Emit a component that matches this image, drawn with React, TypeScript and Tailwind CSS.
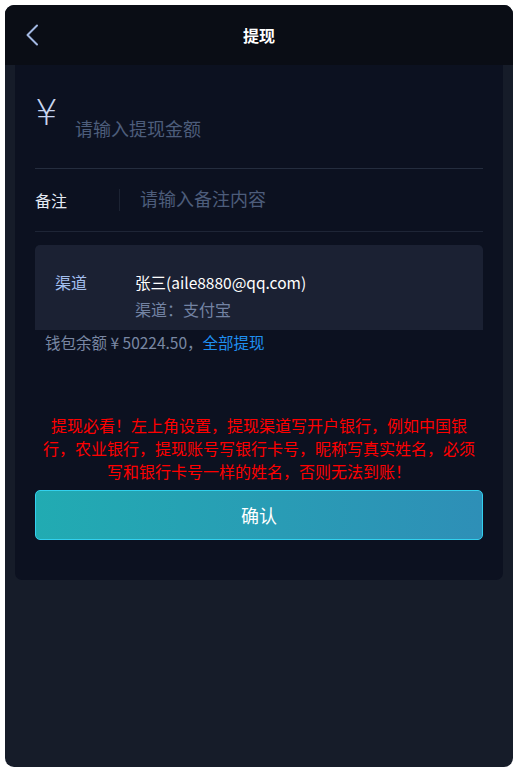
import React from "react";

export default function App() {
  const cjk = { fontFamily: '"Noto Sans CJK SC", "Noto Sans", sans-serif' };
  return (
    <div className="w-[518px] h-[772px] bg-white p-[5px]" style={cjk}>
      <div className="h-[762px] w-[508px] rounded-[9px] bg-[#161c29] overflow-hidden flex flex-col">
        <div className="relative h-[60px] shrink-0 bg-[#0a0d15] flex items-center justify-center">
          <svg className="absolute left-[20px] top-[19px]" width="16" height="24" viewBox="0 0 16 24" fill="none">
            <path d="M12 1.5 L2.5 11 L12 20.5" stroke="#a3b8e2" strokeWidth="2" strokeLinecap="round" strokeLinejoin="round" />
          </svg>
          <span className="text-[16px] font-bold text-white">提现</span>
        </div>
        <div className="px-[10px]">
          <div className="bg-[#0c1120] rounded-b-[7px] px-[20px] pb-[40px]">
            <div className="h-[104px] border-b border-[#252d3e] flex items-start pt-[30px]">
              <span
                className="text-[36px] leading-none text-[#c8d5ef] w-[40px]"
                style={{ fontFamily: '"DejaVu Sans", sans-serif', fontWeight: 200 }}
              >
                ¥
              </span>
              <span className="mt-[21px] h-[24px] leading-[24px] text-[18px] text-[#4d5d7b]">请输入提现金额</span>
            </div>
            <div className="h-[63px] border-b border-[#1e2536] flex items-center">
              <span className="w-[84px] text-[16px] text-[#e4eaf4]">备注</span>
              <span className="w-px h-[22px] bg-[#1c2333]" />
              <span className="ml-[20px] -mt-[4px] text-[18px] text-[#4d5d7b]">请输入备注内容</span>
            </div>
            <div className="mt-[13px] bg-[#1b2133] rounded-t-[5px] pt-[25px] pb-[9px] px-[20px] flex">
              <span className="w-[80px] text-[16px] leading-[24px] text-[#a3bfef]">渠道</span>
              <div className="flex flex-col">
                <span className="text-[15.5px] leading-[24px] text-white">张三(aile8880@qq.com)</span>
                <span className="mt-[3px] text-[16px] leading-[24px] text-[#7383a3]">渠道：支付宝</span>
              </div>
            </div>
            <div className="px-[10px] text-[15.5px] leading-[24px] text-[#7987a3]">
              钱包余额 ¥ 50224.50，<span className="text-[#1f8ff0]">全部提现</span>
            </div>
            <p className="mt-[60px] px-[4px] text-center text-[16px] leading-[23px] text-[#ff0000]">
              提现必看！左上角设置，提现渠道写开户银行，例如中国银行，农业银行，提现账号写银行卡号，昵称写真实姓名，必须写和银行卡号一样的姓名，否则无法到账！
            </p>
            <button className="mt-[7px] w-full h-[50px] rounded-[5px] border border-[#33d0ee] bg-gradient-to-r from-[#21abb2] to-[#2e8fb7] text-white text-[18px] flex items-center justify-center">
              确认
            </button>
          </div>
        </div>
      </div>
    </div>
  );
}
